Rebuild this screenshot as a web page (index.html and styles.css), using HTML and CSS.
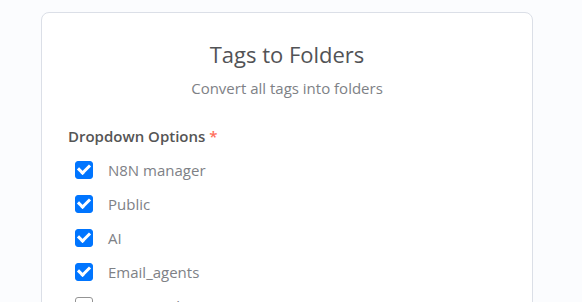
FILE: index.html
```html
<!DOCTYPE html>
<html lang="en">
<head>
    <meta charset="UTF-8">
    <meta name="viewport" content="width=device-width, initial-scale=1.0">
    <title>Tags to Folders</title>
    <link rel="stylesheet" href="styles.css">
</head>
<body>
    <div class="card">
        <div class="header">
            <h1>Tags to Folders</h1>
            <p>Convert all tags into folders</p>
        </div>

        <form class="form">
            <div class="field">
                <label class="field-label">Dropdown Options <span class="required">*</span></label>
                <div class="options">
                    <label class="option"><input type="checkbox" checked><span class="box"></span>N8N manager</label>
                    <label class="option"><input type="checkbox" checked><span class="box"></span>Public</label>
                    <label class="option"><input type="checkbox" checked><span class="box"></span>AI</label>
                    <label class="option"><input type="checkbox" checked><span class="box"></span>Email_agents</label>
                    <label class="option"><input type="checkbox"><span class="box"></span>Time Tracking</label>
                </div>
            </div>
        </form>
    </div>
</body>
</html>
```

FILE: styles.css
```css
body {
    font-family: "Open Sans", sans-serif;
    background-color: #fbfcfe;
    margin: 0;
    padding: 12px 0 0 41px;
}
.card {
    width: 490px;
    min-height: 400px;
    background-color: #fff;
    border: 1px solid #dbdfe7;
    border-radius: 8px;
    box-sizing: content-box;
}
.header {
    text-align: center;
    padding-top: 26px;
}
h1 {
    margin: 0;
    font-size: 22px;
    font-weight: 400;
    color: #525356;
    line-height: 30px;
}
.header p {
    margin: 8px 0 0;
    font-size: 15px;
    color: #7e8186;
    line-height: 22px;
}
.form {
    padding: 0 26px;
    margin-top: 26px;
}
.field-label {
    display: block;
    font-size: 15px;
    font-weight: 600;
    color: #555;
    line-height: 22px;
}
.required {
    color: #ff6d5a;
}
.options {
    margin-top: 6px;
    padding-left: 7px;
}
.option {
    display: flex;
    align-items: center;
    height: 34px;
    font-size: 15px;
    color: #7e8186;
    cursor: pointer;
}
.option input {
    display: none;
}
.box {
    width: 18px;
    height: 18px;
    box-sizing: border-box;
    border: 1px solid #949494;
    border-radius: 3px;
    margin-right: 15px;
    display: flex;
    align-items: center;
    justify-content: center;
}
.option input:checked + .box {
    background-color: #0075ff;
    border-color: #0075ff;
}
.option input:checked + .box::after {
    content: "";
    width: 9px;
    height: 5px;
    border-left: 3px solid #fff;
    border-bottom: 3px solid #fff;
    transform: translateY(-2px) rotate(-45deg);
}
```
